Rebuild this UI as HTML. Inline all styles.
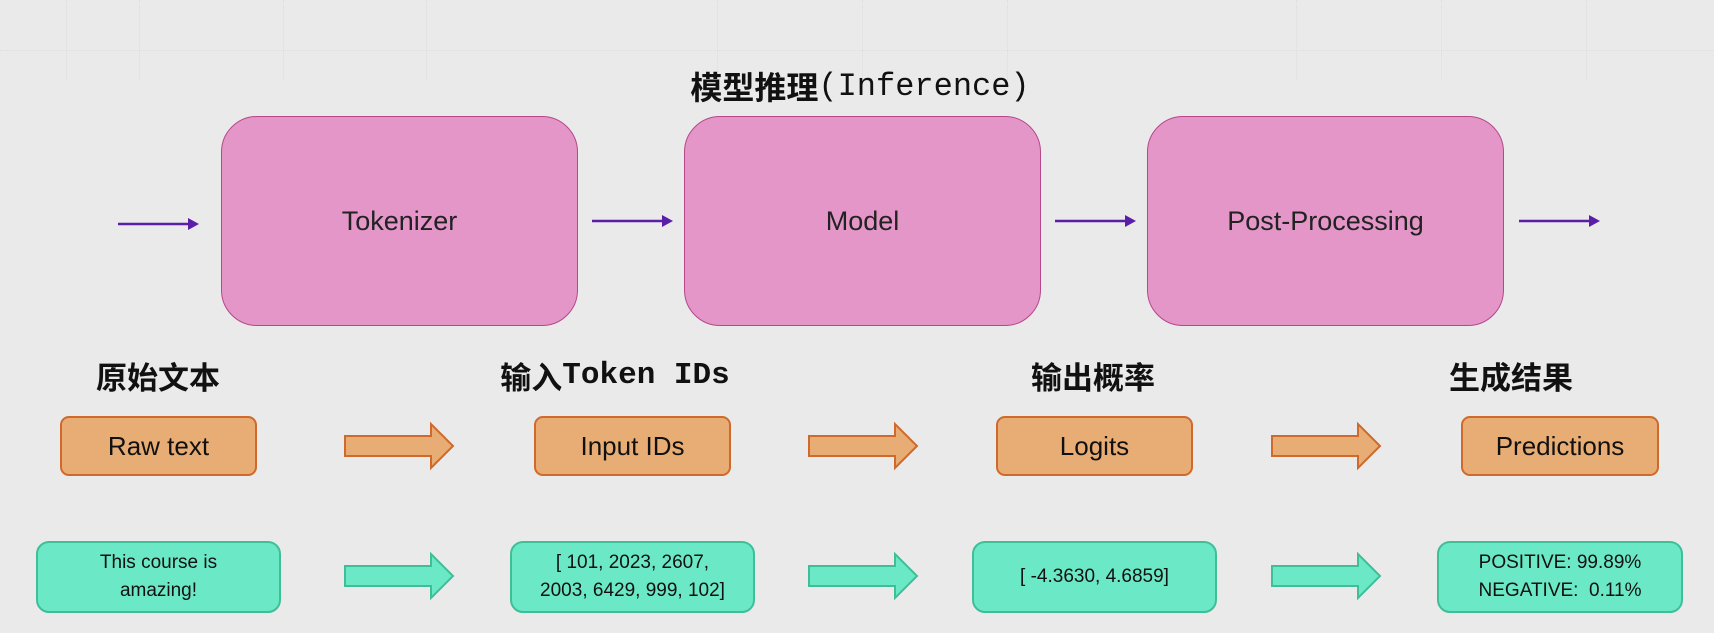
<!DOCTYPE html>
<html><head><meta charset="utf-8"><style>
html,body{margin:0;padding:0}
body{width:1714px;height:633px;background:#ebeaeb;position:relative;overflow:hidden;font-family:"Liberation Sans","Noto Sans CJK SC",sans-serif;color:#111}
.a{position:absolute;box-sizing:border-box;display:flex;align-items:center;justify-content:center;text-align:center}
.p{background:#e396c7;border:1.5px solid #b5478a;border-radius:36px;font-size:27px;color:#222;top:116px;height:210px;width:357px}
.o{background:#e8ad74;border:2px solid #cf6a2c;border-radius:9px;font-size:26px;top:416px;height:60px}
.g{background:#6be8c6;border:2px solid #3fbf98;border-radius:13px;font-size:19px;line-height:1.45;top:541px;height:72px;width:245px}
.t{font-family:"Liberation Sans","Noto Sans CJK SC",sans-serif;font-size:31px;top:355px;height:40px;white-space:nowrap;font-weight:bold}
.m{font-family:"Liberation Mono","Noto Sans CJK SC",monospace}
.vl{position:absolute;top:0;height:80px;border-left:1px dotted #dedddf}
.hl{position:absolute;left:0;width:1714px;border-top:1px dotted #dedddf}
svg{position:absolute}
</style></head><body>
<div class="hl" style="top:50px"></div>
<div class="vl" style="left:66px"></div><div class="vl" style="left:139px"></div><div class="vl" style="left:283px"></div><div class="vl" style="left:426px"></div><div class="vl" style="left:717px"></div><div class="vl" style="left:862px"></div><div class="vl" style="left:1007px"></div><div class="vl" style="left:1296px"></div><div class="vl" style="left:1441px"></div><div class="vl" style="left:1586px"></div>

<div class="a t" style="left:620px;width:480px;top:66px;font-size:32px;font-weight:bold">模型推理<span class="m" style="font-weight:normal">(Inference)</span></div>

<div class="a p" style="left:221px">Tokenizer</div>
<div class="a p" style="left:684px">Model</div>
<div class="a p" style="left:1147px">Post-Processing</div>

<svg width="1714" height="633" style="left:0;top:0">
<g stroke="#5a1ea8" stroke-width="2.5" fill="#5a1ea8">
<line x1="118" y1="224" x2="190" y2="224"/><polygon points="188,218 199,224 188,230" stroke="none"/>
<line x1="592" y1="221" x2="664" y2="221"/><polygon points="662,215 673,221 662,227" stroke="none"/>
<line x1="1055" y1="221" x2="1127" y2="221"/><polygon points="1125,215 1136,221 1125,227" stroke="none"/>
<line x1="1519" y1="221" x2="1591" y2="221"/><polygon points="1589,215 1600,221 1589,227" stroke="none"/>
</g>
<g fill="#e8ad74" stroke="#cf6a2c" stroke-width="2">
<polygon points="345,436 431,436 431,424 453,446 431,468 431,456 345,456"/>
<polygon points="809,436 895,436 895,424 917,446 895,468 895,456 809,456"/>
<polygon points="1272,436 1358,436 1358,424 1380,446 1358,468 1358,456 1272,456"/>
</g>
<g fill="#6be8c6" stroke="#3fbf98" stroke-width="2">
<polygon points="345,566 431,566 431,554 453,576 431,598 431,586 345,586"/>
<polygon points="809,566 895,566 895,554 917,576 895,598 895,586 809,586"/>
<polygon points="1272,566 1358,566 1358,554 1380,576 1358,598 1358,586 1272,586"/>
</g>
</svg>

<div class="a t" style="left:58px;width:200px">原始文本</div>
<div class="a t" style="left:480px;width:270px">输入<span class="m">Token IDs</span></div>
<div class="a t" style="left:993px;width:200px">输出概率</div>
<div class="a t" style="left:1411px;width:200px">生成结果</div>

<div class="a o" style="left:60px;width:197px">Raw text</div>
<div class="a o" style="left:534px;width:197px">Input IDs</div>
<div class="a o" style="left:996px;width:197px">Logits</div>
<div class="a o" style="left:1461px;width:198px">Predictions</div>

<div class="a g" style="left:36px">This course is<br>amazing!</div>
<div class="a g" style="left:510px">[ 101, 2023, 2607,<br>2003, 6429, 999, 102]</div>
<div class="a g" style="left:972px">[ -4.3630, 4.6859]</div>
<div class="a g" style="left:1437px;width:246px">POSITIVE: 99.89%<br>NEGATIVE:&nbsp; 0.11%</div>
</body></html>
